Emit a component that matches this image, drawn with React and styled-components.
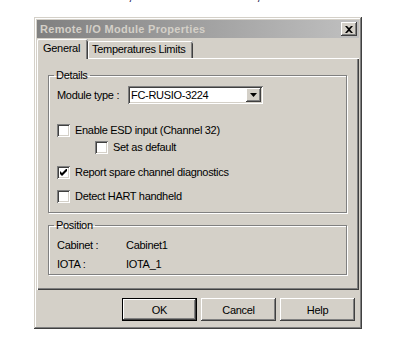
import React from "react";
import styled, { createGlobalStyle } from "styled-components";

const GlobalStyle = createGlobalStyle`
  body {
    margin: 0;
    background: #fff;
    font-family: "Liberation Sans", Arial, sans-serif;
    font-size: 11px;
    letter-spacing: -0.3px;
    color: #000;
  }
`;

const Page = styled.div`
  width: 405px;
  height: 345px;
  overflow: hidden;
`;

const TopStrip = styled.div`
  height: 17px;
  overflow: hidden;
  display: flex;
  gap: 124px;
  padding-left: 128px;
  font-size: 16px;
  line-height: 16px;
  color: #1c2050;
`;

const Tail = styled.span`
  display: block;
  margin-top: -13px;
`;

const Dialog = styled.div`
  margin-left: 34px;
  width: 328px;
  height: 312px;
  box-sizing: border-box;
  padding: 3px;
  background: #d4d0c8;
  display: flex;
  flex-direction: column;
  box-shadow: inset -1px -1px #404040, inset 1px 1px #d4d0c8,
    inset -2px -2px #808080, inset 2px 2px #fff;
`;

const TitleBar = styled.div`
  height: 18px;
  flex-shrink: 0;
  display: flex;
  align-items: center;
  justify-content: space-between;
  padding: 0 2px 0 3px;
  background: linear-gradient(to right, #808080, #c0c0c0);
`;

const Title = styled.span`
  font-weight: bold;
  color: #d4d0c8;
  font-size: 11px;
  letter-spacing: 0.3px;
`;

const CloseButton = styled.div`
  width: 16px;
  height: 14px;
  display: flex;
  align-items: center;
  justify-content: center;
  background: #d4d0c8;
  box-shadow: inset -1px -1px #404040, inset 1px 1px #fff,
    inset -2px -2px #808080;
`;

const TabRow = styled.div`
  display: flex;
  align-items: flex-end;
  flex-shrink: 0;
  margin-top: 1px;
  height: 19px;
  position: relative;
  z-index: 1;
`;

const Tab = styled.div`
  width: ${({ $w }) => $w};
  height: ${({ $active }) => ($active ? "20px" : "17px")};
  margin-bottom: ${({ $active }) => ($active ? "-1px" : "0")};
  padding: ${({ $active }) => ($active ? "3px 0 0 6px" : "2px 0 0 4px")};
  box-sizing: border-box;
  background: #d4d0c8;
  border-radius: 2px 2px 0 0;
  white-space: nowrap;
  box-shadow: inset 1px 0 #fff, inset 0 1px #fff, inset -1px 0 #404040,
    inset -2px 0 #808080;
`;

const Panel = styled.div`
  height: 232px;
  flex-shrink: 0;
  box-sizing: border-box;
  padding: 11px 12px 0 11px;
  display: flex;
  flex-direction: column;
  box-shadow: inset 1px 1px #fff, inset -1px -1px #404040,
    inset -2px -2px #808080;
`;

const Group = styled.fieldset`
  margin: ${({ $top }) => $top || 0} 0 0 0;
  padding: ${({ $pad }) => $pad};
  border: 1px solid #808080;
  box-shadow: inset 1px 1px #fff, 1px 1px #fff;
  min-inline-size: 0;
`;

const Legend = styled.legend`
  padding: 0 2px;
  margin-left: -3px;
  line-height: 13px;
`;

const Row = styled.div`
  display: flex;
  align-items: center;
  height: ${({ $h }) => $h || "16px"};
  margin-top: ${({ $mt }) => $mt || "0"};
  padding-left: ${({ $indent }) => $indent || "0"};
`;

const FieldLabel = styled.span`
  width: ${({ $w }) => $w};
  flex-shrink: 0;
`;

const Combo = styled.div`
  width: 135px;
  height: 18px;
  box-sizing: border-box;
  background: #fff;
  display: flex;
  align-items: center;
  justify-content: space-between;
  padding: 2px;
  box-shadow: inset 1px 1px #808080, inset -1px -1px #fff,
    inset 2px 2px #404040, inset -2px -2px #d4d0c8;
`;

const ComboText = styled.span`
  padding-left: 1px;
`;

const DropButton = styled.div`
  width: 15px;
  height: 14px;
  background: #d4d0c8;
  display: flex;
  align-items: center;
  justify-content: center;
  box-shadow: inset -1px -1px #404040, inset 1px 1px #fff,
    inset -2px -2px #808080;
`;

const Check = styled.div`
  width: 13px;
  height: 13px;
  box-sizing: border-box;
  background: #fff;
  margin-right: 5px;
  flex-shrink: 0;
  display: flex;
  align-items: center;
  justify-content: center;
  box-shadow: inset 1px 1px #808080, inset -1px -1px #fff,
    inset 2px 2px #404040, inset -2px -2px #d4d0c8;
`;

const ButtonBar = styled.div`
  display: flex;
  justify-content: flex-end;
  gap: 4px;
  padding: 8px 4px 0 0;
`;

const Button = styled.div`
  width: 75px;
  height: 23px;
  box-sizing: border-box;
  display: flex;
  align-items: center;
  justify-content: center;
  background: #d4d0c8;
  box-shadow: ${({ $default }) =>
    $default
      ? "inset 0 0 0 1px #000, inset -2px -2px #404040, inset 2px 2px #fff, inset -3px -3px #808080"
      : "inset -1px -1px #404040, inset 1px 1px #fff, inset -2px -2px #808080"};
`;

const CheckBox = ({ checked }) => (
  <Check>
    {checked && (
      <svg width="7" height="7" viewBox="0 0 7 7">
        <path d="M0 2v3l2 2 5-5V-1L2 4z" fill="#000" />
      </svg>
    )}
  </Check>
);

const CheckRow = ({ label, checked, mt, indent }) => (
  <Row $mt={mt} $indent={indent}>
    <CheckBox checked={checked} />
    <span>{label}</span>
  </Row>
);

const App = () => {
  return (
    <Page>
      <GlobalStyle />
      <TopStrip>
        <Tail>,</Tail>
        <Tail>,</Tail>
      </TopStrip>
      <Dialog>
        <TitleBar>
          <Title>Remote I/O Module Properties</Title>
          <CloseButton>
            <svg width="8" height="7" viewBox="0 0 8 7">
              <path d="M0 0h2l2 2 2-2h2L5 3.5 8 7H6L4 5 2 7H0l3-3.5z" fill="#000" />
            </svg>
          </CloseButton>
        </TitleBar>
        <TabRow>
          <Tab $active $w="51px">General</Tab>
          <Tab $w="105px">Temperatures Limits</Tab>
        </TabRow>
        <Panel>
          <Group $pad="0 8px 8px 8px">
            <Legend>Details</Legend>
            <Row $h="18px" $mt="4px">
              <FieldLabel $w="71px">Module type :</FieldLabel>
              <Combo>
                <ComboText>FC-RUSIO-3224</ComboText>
                <DropButton>
                  <svg width="7" height="4" viewBox="0 0 7 4">
                    <path d="M0 0h7L3.5 4z" fill="#000" />
                  </svg>
                </DropButton>
              </Combo>
            </Row>
            <CheckRow mt="18px" label="Enable ESD input (Channel 32)" />
            <CheckRow mt="1px" indent="38px" label="Set as default" />
            <CheckRow mt="9px" checked label="Report spare channel diagnostics" />
            <CheckRow mt="8px" label="Detect HART handheld" />
          </Group>
          <Group $top="6px" $pad="0 8px 2px 8px">
            <Legend>Position</Legend>
            <Row $mt="5px">
              <FieldLabel $w="69px">Cabinet :</FieldLabel>
              <span>Cabinet1</span>
            </Row>
            <Row $mt="3px">
              <FieldLabel $w="69px">IOTA :</FieldLabel>
              <span>IOTA_1</span>
            </Row>
          </Group>
        </Panel>
        <ButtonBar>
          <Button $default>OK</Button>
          <Button>Cancel</Button>
          <Button>Help</Button>
        </ButtonBar>
      </Dialog>
    </Page>
  );
};

export default App;
